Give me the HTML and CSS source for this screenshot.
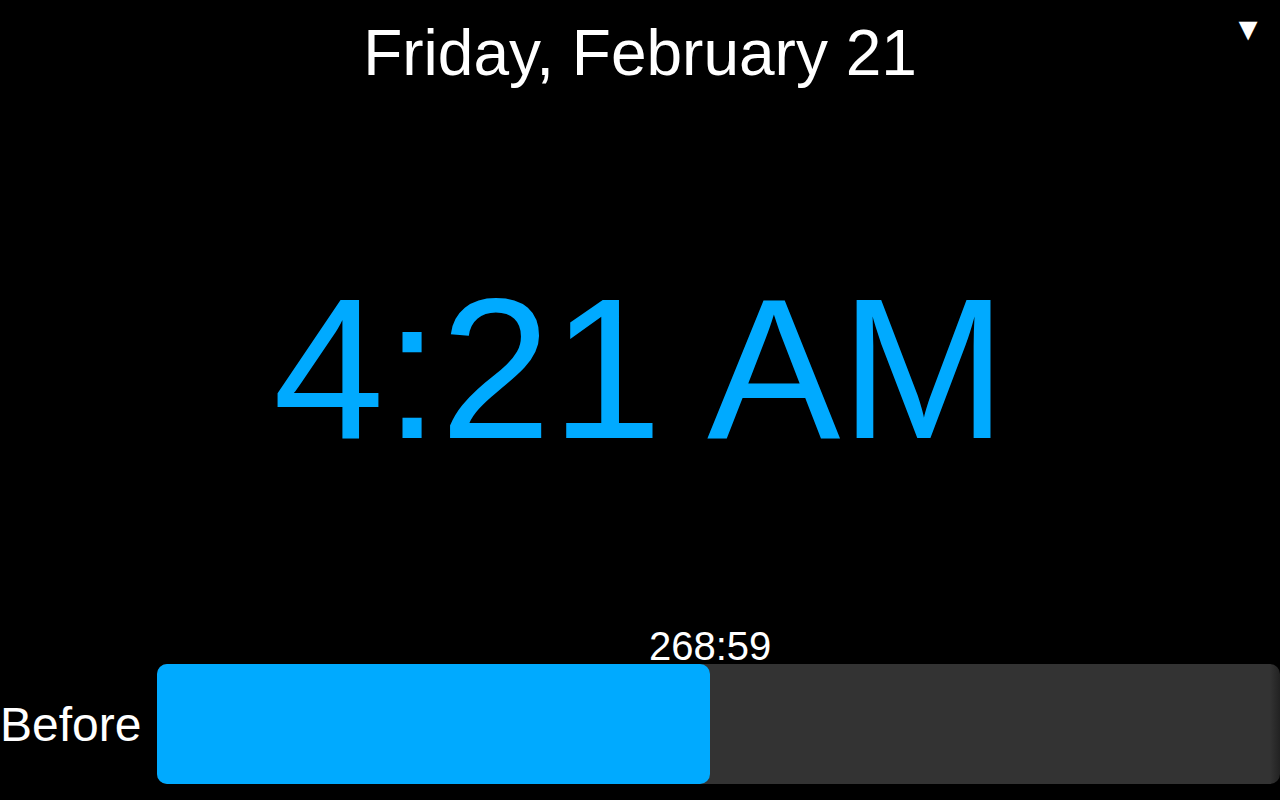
FILE: index.html
```html
<!DOCTYPE html>
<html lang="en">
<head>
<meta charset="utf-8">
<title>Clock</title>
<meta name="viewport" content="width=device-width, initial-scale=1">
<link rel="stylesheet" href="styles.css">
</head>
<body>
<header class="header">
  <h1 class="date">Friday, February 21</h1>
  <button class="menu-button" type="button" aria-label="Open menu">▼</button>
</header>
<main class="clock"><time class="time" datetime="04:21">4:21 AM</time></main>
<footer class="period">
  <div class="period-name" id="period-name">Before</div>
  <div class="progress" role="progressbar" aria-labelledby="period-name" aria-valuenow="49" aria-valuemin="0" aria-valuemax="100">
    <div class="progress-fill" style="width: 49.24%"><span class="remaining">268:59</span></div>
  </div>
</footer>
</body>
</html>
```
FILE: styles.css
```css
* {
  box-sizing: border-box;
}

body {
  display: flex;
  flex-direction: column;
  min-height: 100vh;
  margin: 0;
  overflow: hidden;
  background: #000;
  color: #fff;
  font-family: "Liberation Sans", Arial, sans-serif;
}

.header {
  position: relative;
  padding-top: 16px;
  text-align: center;
}

.date {
  margin: 0;
  font-size: 64px;
  font-weight: 400;
  line-height: 75px;
}

.menu-button {
  position: absolute;
  top: 0;
  right: 0;
  padding: 12px 16px;
  border: 0;
  background: none;
  color: #fff;
  font-family: inherit;
  font-size: 32px;
  line-height: 34px;
  cursor: pointer;
}

.clock {
  display: flex;
  flex: 1;
  align-items: center;
  justify-content: center;
  padding-bottom: 18px;
}

.time {
  color: #0af;
  font-size: 200px;
  line-height: 230px;
  white-space: nowrap;
}

.period {
  display: flex;
  align-items: center;
  gap: 16px;
  padding-bottom: 16px;
}

.period-name {
  font-size: 48px;
  line-height: 57px;
}

.progress {
  flex: 1;
  height: 120px;
  border-radius: 10px;
  background: linear-gradient(to left, #222, #333 10px);
}

.progress-fill {
  position: relative;
  height: 100%;
  border-radius: 10px;
  background: #0af;
}

/* Centred on the leading edge of the fill, just above the bar. */
.remaining {
  position: absolute;
  bottom: 100%;
  left: 100%;
  transform: translateX(-50%);
  font-size: 40px;
  line-height: 36px;
}
```
